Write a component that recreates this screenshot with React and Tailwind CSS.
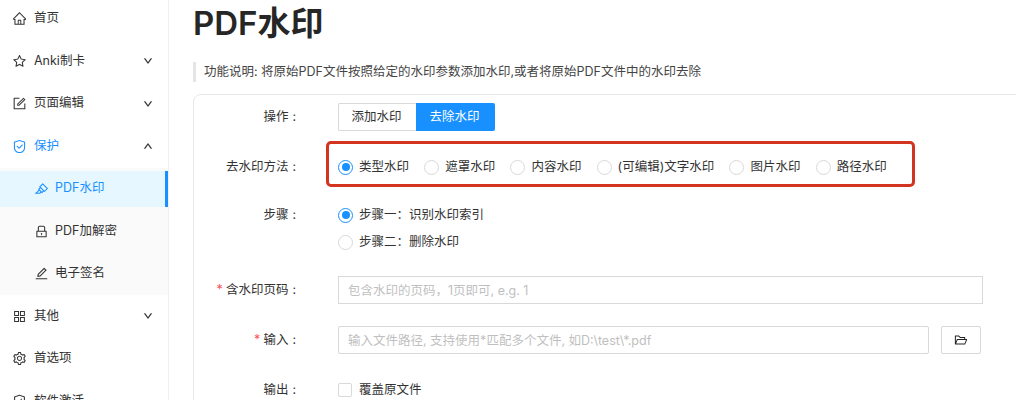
import {
  AiOutlineHome,
  AiOutlineStar,
  AiOutlineForm,
  AiOutlineSafety,
  AiOutlineHighlight,
  AiOutlineLock,
  AiOutlineEdit,
  AiOutlineAppstore,
  AiOutlineSetting,
  AiOutlineSafetyCertificate,
  AiOutlineDown,
  AiOutlineUp,
  AiOutlineFolderOpen,
} from 'react-icons/ai'

function MenuItem({ icon: Icon, label, arrow, active }) {
  return (
    <div className={['flex h-[42.5px] items-center pl-[12px] pr-[15px]', active ? 'text-[#1890ff]' : 'text-[#333]'].join(' ')}>
      <Icon className="h-[15px] w-[15px]" aria-hidden="true" />
      <span className="ml-[7px] flex-1">{label}</span>
      {arrow === 'down' ? <AiOutlineDown className="h-[10px] w-[10px] stroke-[40] text-[#111]" /> : null}
      {arrow === 'up' ? <AiOutlineUp className="h-[10px] w-[10px] stroke-[40] text-[#111]" /> : null}
    </div>
  )
}

function SubItem({ icon: Icon, label, selected }) {
  return (
    <div className="flex h-[42.5px] items-center">
      <div
        className={[
          'flex h-[36px] flex-1 items-center pl-[34px]',
          selected ? 'border-r-[3px] border-[#1890ff] bg-[#e6f7ff] text-[#1890ff]' : 'text-[#333]',
        ].join(' ')}
      >
        <Icon className="h-[15px] w-[15px]" aria-hidden="true" />
        <span className="ml-[6px]">{label}</span>
      </div>
    </div>
  )
}

function Radio({ label, checked }) {
  return (
    <label className="flex items-center gap-[6px]">
      <span
        className={[
          'flex h-[15px] w-[15px] items-center justify-center rounded-full border bg-white',
          checked ? 'border-[#1890ff]' : 'border-[#d9d9d9]',
        ].join(' ')}
      >
        {checked ? <span className="h-[8px] w-[8px] rounded-full bg-[#1890ff]" /> : null}
      </span>
      <span>{label}</span>
    </label>
  )
}

function Row({ label, required, className, children }) {
  return (
    <div className={['flex', className].join(' ')}>
      <div className="flex h-[28px] w-[102px] shrink-0 items-center justify-end text-[#333]">
        {required ? <span className="mr-[3px] text-[#ff4d4f]">*</span> : null}
        <span>{label}</span>
        <span className="ml-[4px]">:</span>
      </div>
      <div className="ml-[42px] flex-1">{children}</div>
    </div>
  )
}

export default function App() {
  return (
    <div className="flex h-[400px] w-[1016px] overflow-hidden bg-white font-['Inter','Noto_Sans_CJK_SC',sans-serif] text-[12.5px] text-[#333]">
      <aside className="w-[169px] shrink-0 border-r border-[#f0f0f0] pt-[1px]">
        <div className="-mt-[3.5px]">
          <MenuItem icon={AiOutlineHome} label="首页" />
          <MenuItem icon={AiOutlineStar} label="Anki制卡" arrow="down" />
          <MenuItem icon={AiOutlineForm} label="页面编辑" arrow="down" />
          <MenuItem icon={AiOutlineSafety} label="保护" arrow="up" active />
          <div className="bg-[#fafafa]">
            <SubItem icon={AiOutlineHighlight} label="PDF水印" selected />
            <SubItem icon={AiOutlineLock} label="PDF加解密" />
            <SubItem icon={AiOutlineEdit} label="电子签名" />
          </div>
          <MenuItem icon={AiOutlineAppstore} label="其他" arrow="down" />
          <MenuItem icon={AiOutlineSetting} label="首选项" />
          <MenuItem icon={AiOutlineSafetyCertificate} label="软件激活" />
        </div>
      </aside>

      <main className="relative flex-1 pl-[24px]">
        <h1 className="h-[46px] text-[33px] leading-[46px] font-semibold text-[#262626]">PDF水印</h1>
        <p className="mt-[16px] h-[20px] border-l-[3px] border-[#e5e5e5] pl-[8px] text-[12.5px] leading-[20px] text-[#444]">
          功能说明: 将原始PDF文件按照给定的水印参数添加水印,或者将原始PDF文件中的水印去除
        </p>

        <div className="mt-[12px] -mr-[20px] h-[340px] rounded-tl-[8px] border border-[#e8e8e8] pt-[8px]">
          <Row label="操作" className="h-[28px]">
            <div className="flex h-[28px] w-[157px]">
              <div className="flex w-[78px] items-center justify-center rounded-l-[2px] border border-r-0 border-[#d9d9d9] bg-white pr-[2px]">
                添加水印
              </div>
              <div className="flex w-[79px] items-center justify-center rounded-r-[2px] bg-[#1890ff] pr-[2px] text-white">
                去除水印
              </div>
            </div>
          </Row>

          <Row label="去水印方法" className="mt-[22px] h-[28px]">
            <div className="flex h-[28px] items-center gap-[15.2px]">
              <Radio label="类型水印" checked />
              <Radio label="遮罩水印" />
              <Radio label="内容水印" />
              <Radio label="(可编辑)文字水印" />
              <Radio label="图片水印" />
              <Radio label="路径水印" />
            </div>
          </Row>

          <Row label="步骤" className="mt-[20px] h-[28px] items-start">
            <div className="flex flex-col">
              <div className="flex h-[28px] items-center">
                <Radio label="步骤一：识别水印索引" checked />
              </div>
              <div className="flex h-[26px] items-center">
                <Radio label="步骤二：删除水印" />
              </div>
            </div>
          </Row>

          <Row label="含水印页码" required className="mt-[47px] h-[28px]">
            <input
              className="h-[28px] w-[645px] border border-[#d9d9d9] px-[9px] outline-none placeholder:text-[#bfbfbf]"
              placeholder="包含水印的页码，1页即可, e.g. 1"
              readOnly
            />
          </Row>

          <Row label="输入" required className="mt-[22px] h-[28px]">
            <div className="flex gap-[12px]">
              <input
                className="h-[28px] w-[591px] rounded-[2px] border border-[#d9d9d9] px-[9px] outline-none placeholder:text-[#bfbfbf]"
                placeholder="输入文件路径, 支持使用*匹配多个文件, 如D:\test\*.pdf"
                readOnly
              />
              <button type="button" className="flex h-[28px] w-[40px] items-center justify-center rounded-[2px] border border-[#d9d9d9] bg-white">
                <AiOutlineFolderOpen className="h-[14px] w-[14px] text-[#222]" />
              </button>
            </div>
          </Row>

          <Row label="输出" className="mt-[22px] h-[28px]">
            <label className="flex h-[28px] items-center gap-[7px]">
              <span className="h-[14px] w-[14px] rounded-[2px] border border-[#d9d9d9] bg-white" />
              <span>覆盖原文件</span>
            </label>
          </Row>
        </div>

        {/* red annotation drawn over the screenshot */}
        <div className="absolute left-[157px] top-[141px] h-[46px] w-[589px] rounded-[5px] border-[3px] border-[#d3341f]" />
      </main>
    </div>
  )
}
